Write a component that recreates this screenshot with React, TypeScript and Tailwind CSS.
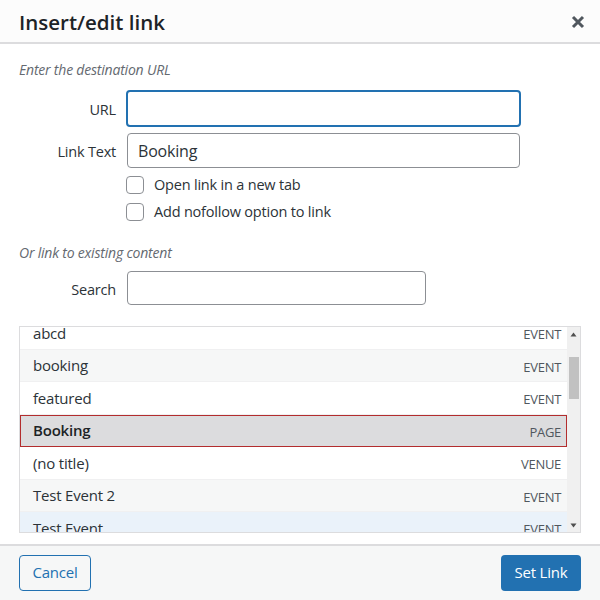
import React from "react";

const rows = [
  { t: "abcd", k: "EVENT", bg: "bg-white" },
  { t: "booking", k: "EVENT", bg: "bg-[#f6f7f7]" },
  { t: "featured", k: "EVENT", bg: "bg-white" },
  { t: "Booking", k: "PAGE", bg: "bg-[#dcdcde]", sel: true },
  { t: "(no title)", k: "VENUE", bg: "bg-white" },
  { t: "Test Event 2", k: "EVENT", bg: "bg-[#f6f7f7]" },
  { t: "Test Event", k: "EVENT", bg: "bg-[#eaf2fa]" },
];

export default function App() {
  return (
    <div
      className="w-[600px] h-[600px] flex flex-col bg-white text-[#2c3338] overflow-hidden"
      style={{ fontFamily: '"Open Sans", "Noto Sans", sans-serif' }}
    >
      {/* Header */}
      <div className="h-[44px] shrink-0 flex items-center justify-between pl-[19px] pr-[14px] bg-[#fcfcfc] border-b-2 border-[#dcdcde]">
        <div className="text-[20.5px] font-semibold text-[#1d2327] leading-none pt-[2px]">Insert/edit link</div>
        <svg width="16" height="16" viewBox="0 0 16 16" className="mt-[1px]">
          <path d="M3 3 L13 13 M13 3 L3 13" stroke="#50575e" strokeWidth="3" strokeLinecap="butt" />
        </svg>
      </div>

      {/* Body */}
      <div className="flex-1 flex flex-col px-[19px] pt-[16px]">
        <div className="text-[14px] italic text-[#646970] leading-[20px] tracking-[-0.2px]">Enter the destination URL</div>
        <div className="mt-[10px] flex flex-col gap-[6px]">
          <div className="flex items-center">
            <div className="w-[107px] pr-[10px] pt-[3px] text-right text-[14.5px] tracking-[-0.2px]">URL</div>
            <div className="w-[395px] h-[37px] rounded-[4px] border-2 border-[#2271b1]" />
          </div>
          <div className="flex items-center">
            <div className="w-[107px] pr-[10px] pt-[3px] text-right text-[14.5px] tracking-[-0.2px]">Link Text</div>
            <div className="w-[393px] h-[35px] ml-[1px] rounded-[4px] border border-[#8c8f94] flex items-center px-[10px] text-[16px] tracking-[-0.2px]">Booking</div>
          </div>
        </div>
        <div className="ml-[107px] mt-[8px] flex flex-col gap-[9px]">
          <div className="flex items-center gap-[10px]">
            <div className="w-[18px] h-[18px] rounded-[4px] border border-[#8c8f94] bg-white" />
            <div className="text-[14.5px] tracking-[-0.2px] leading-[18px]">Open link in a new tab</div>
          </div>
          <div className="flex items-center gap-[10px]">
            <div className="w-[18px] h-[18px] rounded-[4px] border border-[#8c8f94] bg-white" />
            <div className="text-[14.5px] tracking-[-0.2px] leading-[18px]">Add nofollow option to link</div>
          </div>
        </div>
        <div className="mt-[22px] text-[14px] italic text-[#646970] leading-[20px] tracking-[-0.2px]">Or link to existing content</div>
        <div className="mt-[8px] flex items-center">
          <div className="w-[107px] pr-[10px] pt-[3px] text-right text-[14.5px] tracking-[-0.2px]">Search</div>
          <div className="w-[299px] h-[34px] ml-[1px] rounded-[4px] border border-[#8c8f94]" />
        </div>

        {/* Results */}
        <div className="mt-[21px] h-[207px] w-[562px] border border-[#dcdcde] flex overflow-hidden">
          <div className="flex-1 overflow-hidden">
            <div className="-mt-[10px] flex flex-col">
              {rows.map((r) => (
                <div
                  key={r.t}
                  className={`h-[32.5px] shrink-0 flex items-center justify-between pl-[13px] pr-[6px] border-b border-[#f0f0f1] ${r.bg} ${
                    r.sel ? "outline outline-[1.5px] outline-[#b32d2e] -outline-offset-1 relative" : ""
                  }`}
                >
                  <span className={`text-[15px] tracking-[-0.2px] ${r.sel ? "font-semibold text-[#1d2327]" : "text-[#2c3338]"}`}>{r.t}</span>
                  <span className="text-[13px] text-[#50575e] tracking-[-0.3px] pt-[4px]">{r.k}</span>
                </div>
              ))}
            </div>
          </div>
          <div className="w-[13px] bg-[#f0f0f0] flex flex-col items-center">
            <div className="h-[14px] flex items-center justify-center">
              <svg width="7" height="5" viewBox="0 0 7 5"><path d="M3.5 0.5 L6.5 4.5 L0.5 4.5 Z" fill="#505050" /></svg>
            </div>
            <div className="mt-[16px] w-[10px] h-[42px] bg-[#c1c1c1]" />
            <div className="flex-1" />
            <div className="h-[14px] flex items-center justify-center">
              <svg width="7" height="5" viewBox="0 0 7 5"><path d="M0.5 0.5 L6.5 0.5 L3.5 4.5 Z" fill="#505050" /></svg>
            </div>
          </div>
        </div>
      </div>

      {/* Footer */}
      <div className="h-[56px] shrink-0 border-t-2 border-[#dcdcde] bg-[#f6f7f7] flex items-center justify-between px-[19px] pb-[1px]">
        <div className="h-[36px] w-[72px] rounded-[4px] border border-[#2271b1] bg-[#f6f7f7] text-[#2271b1] text-[15px] flex items-center justify-center tracking-[-0.2px]">Cancel</div>
        <div className="h-[36px] w-[80px] rounded-[4px] bg-[#2271b1] text-white text-[15px] flex items-center justify-center tracking-[-0.2px]">Set Link</div>
      </div>
    </div>
  );
}
